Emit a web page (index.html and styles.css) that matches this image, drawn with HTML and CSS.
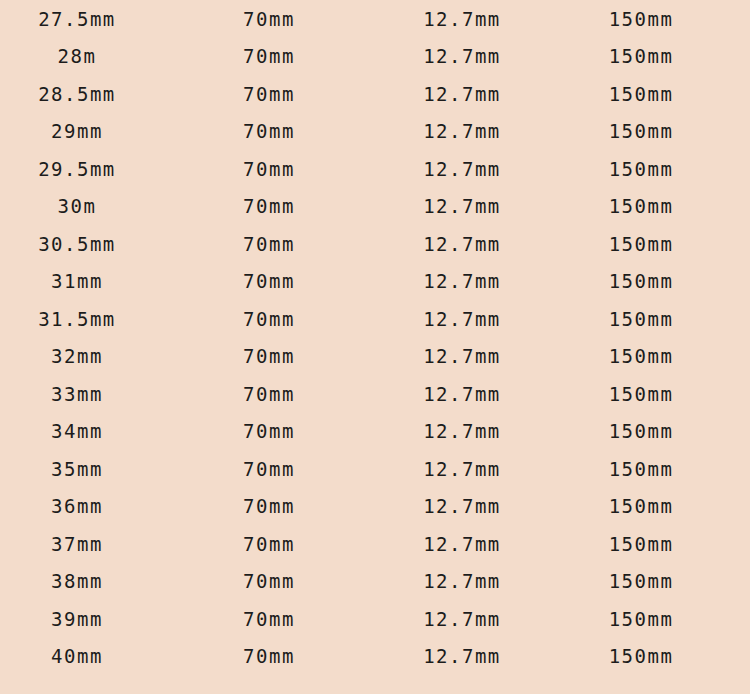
FILE: index.html
```html
<!DOCTYPE html>
<html lang="ko">
<head>
    <meta charset="UTF-8">
    <meta name="viewport" content="width=device-width, initial-scale=1.0">
    <title>Size Table</title>
    <link rel="stylesheet" href="styles.css">
</head>
<body>
    <div class="size-table">
        <div class="row"><span>27.5mm</span><span>70mm</span><span>12.7mm</span><span>150mm</span></div>
        <div class="row"><span>28m</span><span>70mm</span><span>12.7mm</span><span>150mm</span></div>
        <div class="row"><span>28.5mm</span><span>70mm</span><span>12.7mm</span><span>150mm</span></div>
        <div class="row"><span>29mm</span><span>70mm</span><span>12.7mm</span><span>150mm</span></div>
        <div class="row"><span>29.5mm</span><span>70mm</span><span>12.7mm</span><span>150mm</span></div>
        <div class="row"><span>30m</span><span>70mm</span><span>12.7mm</span><span>150mm</span></div>
        <div class="row"><span>30.5mm</span><span>70mm</span><span>12.7mm</span><span>150mm</span></div>
        <div class="row"><span>31mm</span><span>70mm</span><span>12.7mm</span><span>150mm</span></div>
        <div class="row"><span>31.5mm</span><span>70mm</span><span>12.7mm</span><span>150mm</span></div>
        <div class="row"><span>32mm</span><span>70mm</span><span>12.7mm</span><span>150mm</span></div>
        <div class="row"><span>33mm</span><span>70mm</span><span>12.7mm</span><span>150mm</span></div>
        <div class="row"><span>34mm</span><span>70mm</span><span>12.7mm</span><span>150mm</span></div>
        <div class="row"><span>35mm</span><span>70mm</span><span>12.7mm</span><span>150mm</span></div>
        <div class="row"><span>36mm</span><span>70mm</span><span>12.7mm</span><span>150mm</span></div>
        <div class="row"><span>37mm</span><span>70mm</span><span>12.7mm</span><span>150mm</span></div>
        <div class="row"><span>38mm</span><span>70mm</span><span>12.7mm</span><span>150mm</span></div>
        <div class="row"><span>39mm</span><span>70mm</span><span>12.7mm</span><span>150mm</span></div>
        <div class="row"><span>40mm</span><span>70mm</span><span>12.7mm</span><span>150mm</span></div>
    </div>
</body>
</html>
```

FILE: styles.css
```css
html, body {
    margin: 0;
    padding: 0;
    background-color: #f3dccb;
}
.size-table {
    font-family: 'DejaVu Sans Mono', 'Liberation Mono', monospace;
    font-size: 19px;
    letter-spacing: 1.5px;
    color: #1c1c1c;
    width: 750px;
}
.row {
    display: grid;
    grid-template-columns: 154px 230px 156px 202px;
    height: 37.5px;
    align-items: center;
}
.row span {
    text-align: center;
}
```
